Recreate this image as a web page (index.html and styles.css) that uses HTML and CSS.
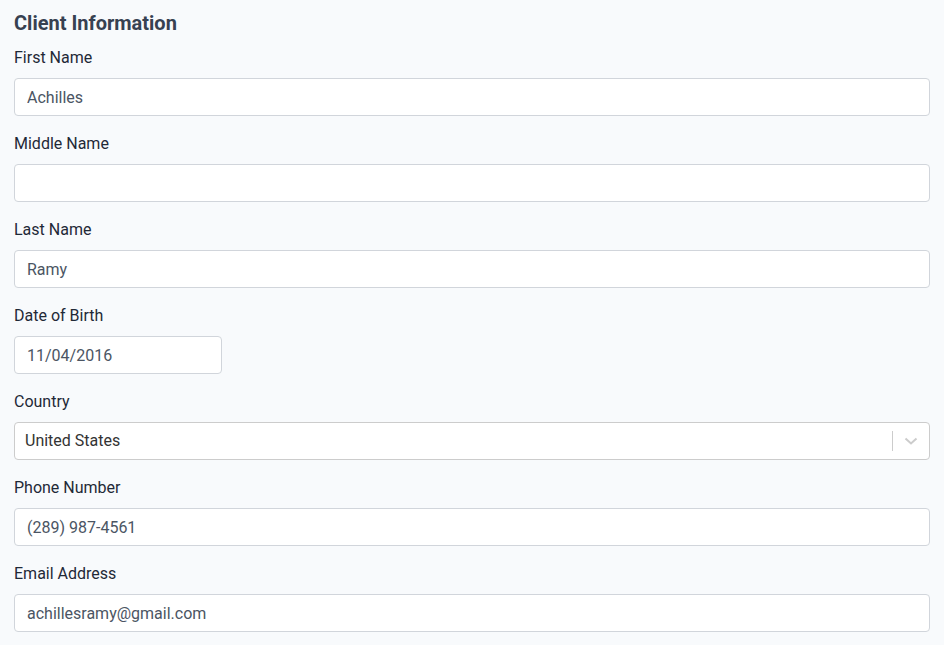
FILE: index.html
```html
<!DOCTYPE html>
<html>
<head>
<meta charset="utf-8">
<link rel="stylesheet" href="styles.css">
</head>
<body>
<form class="form">
  <h2 class="title">Client Information</h2>
  <div class="group">
    <label class="label">First Name</label>
    <input class="input" type="text" value="Achilles">
  </div>
  <div class="group">
    <label class="label">Middle Name</label>
    <input class="input" type="text" value="">
  </div>
  <div class="group">
    <label class="label">Last Name</label>
    <input class="input" type="text" value="Ramy">
  </div>
  <div class="group">
    <label class="label">Date of Birth</label>
    <input class="input date" type="text" value="11/04/2016">
  </div>
  <div class="group">
    <label class="label">Country</label>
    <div class="select">
      <div class="select-value">United States</div>
      <div class="select-ind">
        <span class="sep"></span>
        <svg class="chev" width="20" height="20" viewBox="0 0 20 20"><path d="M4.5 7.5 L10 12.5 L15.5 7.5" fill="none" stroke="#cccccc" stroke-width="2"/></svg>
      </div>
    </div>
  </div>
  <div class="group">
    <label class="label">Phone Number</label>
    <input class="input" type="text" value="(289) 987-4561">
  </div>
  <div class="group">
    <label class="label">Email Address</label>
    <input class="input" type="text" value="achillesramy@gmail.com">
  </div>
</form>
</body>
</html>
```
FILE: styles.css
```css
html, body {
  margin: 0;
  padding: 0;
  background: #f8fafc;
}
body {
  font-family: Roboto, "Noto Sans", sans-serif;
  color: #374151;
}
.form {
  padding: 9px 14px 0 14px;
  display: flex;
  flex-direction: column;
}
.title {
  margin: 0 0 8px 0;
  font-size: 20px;
  font-weight: 700;
  line-height: 28px;
  color: #374151;
}
.group {
  display: flex;
  flex-direction: column;
  margin-bottom: 15px;
}
.label {
  font-size: 16px;
  line-height: 24px;
  padding-top: 1px;
  margin-bottom: 8px;
  color: #1f2937;
}
.input {
  box-sizing: border-box;
  height: 38px;
  width: 100%;
  border: 1px solid #d1d5db;
  border-radius: 4px;
  background: #ffffff;
  padding: 0 12px;
  font-family: Roboto, "Noto Sans", sans-serif;
  font-size: 16px;
  color: #4b5563;
  outline: none;
}
.date {
  width: 208px;
}
.select {
  box-sizing: border-box;
  height: 38px;
  border: 1px solid #cccccc;
  border-radius: 4px;
  background: #ffffff;
  display: flex;
  align-items: center;
}
.select-value {
  flex: 1;
  padding-left: 10px;
  padding-bottom: 2px;
  font-size: 16px;
  color: #333333;
}
.select-ind {
  display: flex;
  align-items: center;
  height: 100%;
}
.sep {
  width: 1px;
  height: 20px;
  background: #cccccc;
}
.chev {
  margin: 0 8px;
}
```
